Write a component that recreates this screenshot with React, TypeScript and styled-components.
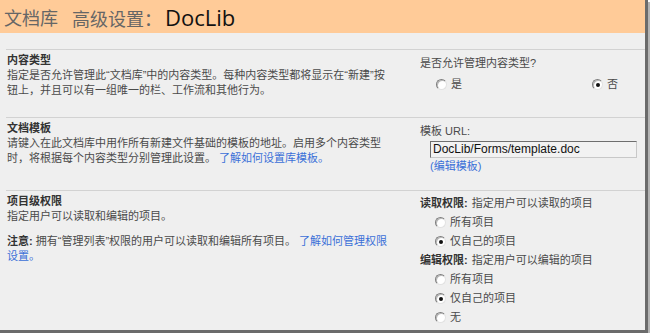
import styled, { createGlobalStyle } from "styled-components";

const GlobalStyle = createGlobalStyle`
  html, body {
    margin: 0;
    padding: 0;
    background: #ffffff;
  }
  body {
    font-family: "Liberation Sans", "Noto Sans CJK SC", sans-serif;
    font-size: 11px;
    color: #4a4a4a;
  }
`;

const Frame = styled.div`
  width: 645px;
  height: 330px;
  background: #efefef;
  border-right: 3px solid #6b6b6b;
  border-bottom: 3px solid #6b6b6b;
  box-shadow: 2px 2px 0 #b4b4b4;
  display: flex;
  flex-direction: column;
  overflow: hidden;
`;

const Header = styled.div`
  height: 33px;
  flex: none;
  background: #ffcb98;
  padding-left: 4px;
  display: flex;
  align-items: center;
  gap: 14px;
  font-family: "Noto Sans CJK SC", sans-serif;
  font-size: 18px;
  color: #666666;
`;

const PageName = styled.span`
  font-family: "Open Sans", "Noto Sans", sans-serif;
  font-size: 22px;
  color: #111111;
  margin-left: 3px;
`;

const Body = styled.div`
  padding-top: 16px;
`;

const Section = styled.div<{ $pb: number }>`
  margin-left: 6px;
  border-top: 1px solid #d2d2d2;
  display: grid;
  grid-template-columns: 414px 1fr;
  padding: 3px 0 ${(p) => p.$pb}px;
`;

const LeftCol = styled.div`
  padding-left: 1px;
  max-width: 386px;
  line-height: 15px;
`;

const RightCol = styled.div<{ $pt: number }>`
  padding-top: ${(p) => p.$pt}px;
  line-height: 15px;
`;

const Title = styled.div`
  font-weight: bold;
  color: #333333;
`;

const Desc = styled.div<{ $mt?: number }>`
  margin-top: ${(p) => p.$mt ?? 0}px;
`;

const Note = styled.b`
  color: #333333;
`;

const Link = styled.a`
  color: #3b6fd8;
  text-decoration: none;
`;

const RadioPair = styled.div`
  display: flex;
  justify-content: space-between;
  margin-top: 6px;
  padding: 0 27px 0 16px;
`;

const Option = styled.label<{ $h?: number }>`
  display: flex;
  align-items: center;
  gap: 4px;
  height: ${(p) => p.$h ?? 15}px;
`;

const OptionList = styled.div`
  padding-left: 15px;
`;

const Radio = styled.span<{ $checked?: boolean }>`
  position: relative;
  width: 9px;
  height: 9px;
  border-radius: 50%;
  background: #ffffff;
  border: 1px solid;
  border-color: #7d7d7d #e2e2e2 #e2e2e2 #7d7d7d;
  box-shadow: inset 1px 1px 0 #b9b9b9;
  flex: none;
  &::after {
    content: "";
    display: ${(p) => (p.$checked ? "block" : "none")};
    position: absolute;
    left: 2.5px;
    top: 2.5px;
    width: 4px;
    height: 4px;
    border-radius: 50%;
    background: #111111;
  }
`;

const PermHead = styled.div`
  height: 19px;
  display: flex;
  align-items: center;
  b {
    color: #333333;
    margin-right: 4px;
  }
`;

const UrlBox = styled.div`
  margin: 2px 0 1px 10px;
  width: 203px;
  height: 15px;
  border: 1px solid;
  border-color: #6e6e6e #c8c8c8 #c8c8c8 #6e6e6e;
  background: #f2f2f2;
  padding: 0 0 0 2px;
  font-family: "Liberation Sans", sans-serif;
  font-size: 12px;
  line-height: 15px;
  color: #111111;
`;

const EditLink = styled(Link)`
  display: block;
  margin-left: 10px;
`;

export default function App() {
  return (
    <>
      <GlobalStyle />
      <Frame>
        <Header>
          <span>文档库</span>
          <span>
            高级设置：<PageName>DocLib</PageName>
          </span>
        </Header>
        <Body>
          <Section $pb={19}>
            <LeftCol>
              <Title>内容类型</Title>
              <Desc>
                指定是否允许管理此“文档库”中的内容类型。每种内容类型都将显示在“新建”按钮上，并且可以有一组唯一的栏、工作流和其他行为。
              </Desc>
            </LeftCol>
            <RightCol $pt={3}>
              <div>是否允许管理内容类型?</div>
              <RadioPair>
                <Option>
                  <Radio />是
                </Option>
                <Option>
                  <Radio $checked />否
                </Option>
              </RadioPair>
            </RightCol>
          </Section>
          <Section $pb={16}>
            <LeftCol>
              <Title>文档模板</Title>
              <Desc>
                请键入在此文档库中用作所有新建文件基础的模板的地址。启用多个内容类型时，将根据每个内容类型分别管理此设置。 <Link>了解如何设置库模板。</Link>
              </Desc>
            </LeftCol>
            <RightCol $pt={3}>
              <div>模板 URL:</div>
              <UrlBox>DocLib/Forms/template.doc</UrlBox>
              <EditLink>(编辑模板)</EditLink>
            </RightCol>
          </Section>
          <Section $pb={0}>
            <LeftCol>
              <Title>项目级权限</Title>
              <Desc>指定用户可以读取和编辑的项目。</Desc>
              <Desc $mt={10}>
                <Note>注意:</Note> 拥有“管理列表”权限的用户可以读取和编辑所有项目。 <Link>了解如何管理权限设置。</Link>
              </Desc>
            </LeftCol>
            <RightCol $pt={0}>
              <PermHead>
                <b>读取权限:</b>指定用户可以读取的项目
              </PermHead>
              <OptionList>
                <Option $h={19}>
                  <Radio />所有项目
                </Option>
                <Option $h={19}>
                  <Radio $checked />仅自己的项目
                </Option>
              </OptionList>
              <PermHead>
                <b>编辑权限:</b>指定用户可以编辑的项目
              </PermHead>
              <OptionList>
                <Option $h={19}>
                  <Radio />所有项目
                </Option>
                <Option $h={19}>
                  <Radio $checked />仅自己的项目
                </Option>
                <Option $h={19}>
                  <Radio />无
                </Option>
              </OptionList>
            </RightCol>
          </Section>
        </Body>
      </Frame>
    </>
  );
}
